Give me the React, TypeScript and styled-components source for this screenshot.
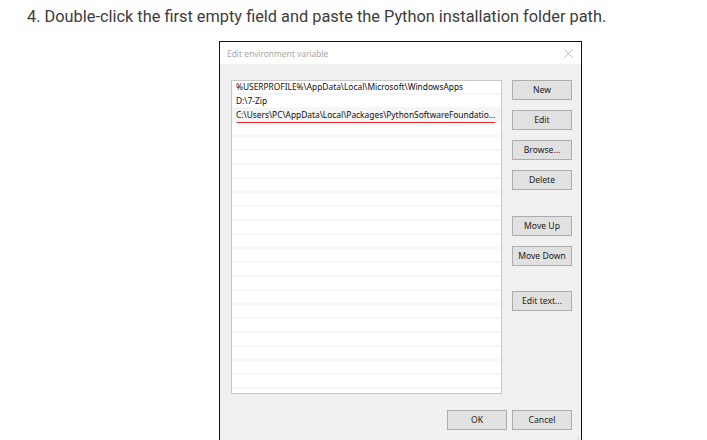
import styled, { createGlobalStyle } from "styled-components";

const GlobalStyle = createGlobalStyle`
  html, body {
    margin: 0;
    padding: 0;
    background: #fff;
    overflow: hidden;
  }
`;

const Page = styled.div`
  width: 707px;
  height: 440px;
  overflow: hidden;
`;

const Step = styled.p`
  margin: 0;
  padding: 5px 0 0 27px;
  font-family: Roboto, "Liberation Sans", sans-serif;
  font-size: 16.35px;
  line-height: 24px;
  color: #3c3c3c;
`;

const Dialog = styled.div`
  position: relative;
  margin: 12px 0 0 219px;
  width: 361px;
  height: 420px;
  border: 1px solid #111;
  border-bottom: none;
  background: #f0f0f0;
  font-family: "Noto Sans", "Open Sans", sans-serif;
  font-size: 8.4px;
`;

const TitleBar = styled.div`
  height: 22px;
  background: #fff;
  display: flex;
  align-items: center;
  justify-content: space-between;
  padding: 0 8px 0 7px;
  color: #a8a8a8;
`;

const Body = styled.div`
  display: flex;
  gap: 10px;
  padding: 16px 9px 0 11px;
`;

const List = styled.div`
  width: 269px;
  height: 312px;
  border: 1px solid #c9c9c9;
  background: #fff;
  overflow: hidden;
`;

const Row = styled.div<{ $selected?: boolean }>`
  position: relative;
  height: 12px;
  line-height: 12px;
  padding: 0 4px;
  border-bottom: 2px solid #f6f6f6;
  background: ${(p) => (p.$selected ? "#f5f5f5" : "#fff")};
  color: #111;
`;

const RowText = styled.span`
  display: block;
  white-space: nowrap;
  overflow: hidden;
  text-overflow: ellipsis;
`;

const Underline = styled.div`
  position: absolute;
  left: 4px;
  right: 5px;
  bottom: -4px;
  height: 3px;
  border-radius: 2px;
  background: #e8232b;
`;

const Side = styled.div`
  display: flex;
  flex-direction: column;
`;

const Button = styled.button<{ $gap?: number }>`
  width: 60px;
  height: 20px;
  margin-top: ${(p) => p.$gap ?? 0}px;
  padding: 0;
  border: 1px solid #adadad;
  background: #e1e1e1;
  color: #222;
  font-family: inherit;
  font-size: 8.6px;
`;

const Footer = styled.div`
  display: flex;
  justify-content: flex-end;
  gap: 5px;
  padding: 16px 9px 0 0;
`;

const Grip = styled.svg`
  position: absolute;
  right: 1px;
  bottom: 18px;
`;

const paths = [
  "%USERPROFILE%\\AppData\\Local\\Microsoft\\WindowsApps",
  "D:\\7-Zip",
  "C:\\Users\\PC\\AppData\\Local\\Packages\\PythonSoftwareFoundation.Python.3.11_qbz5n2kfra8p0\\LocalCache",
];

const rows = Array.from({ length: 23 }, (_, i) => paths[i] ?? "");

const App = () => {
  return (
    <Page>
      <GlobalStyle />
      <Step>
        4. Double-click the first empty field and paste the Python installation
        folder path.
      </Step>
      <Dialog>
        <TitleBar>
          <span>Edit environment variable</span>
          <svg width="9" height="9" viewBox="0 0 9 9">
            <path d="M0.5 0.5 L8.5 8.5 M8.5 0.5 L0.5 8.5" stroke="#b5b5b5" strokeWidth="0.9" />
          </svg>
        </TitleBar>
        <Body>
          <List>
            {rows.map((r, i) => (
              <Row key={i} $selected={i === 2}>
                <RowText>{r || "\u00a0"}</RowText>
                {i === 2 && <Underline />}
              </Row>
            ))}
          </List>
          <Side>
            <Button>New</Button>
            <Button $gap={10}>Edit</Button>
            <Button $gap={10}>Browse...</Button>
            <Button $gap={10}>Delete</Button>
            <Button $gap={26}>Move Up</Button>
            <Button $gap={10}>Move Down</Button>
            <Button $gap={25}>Edit text...</Button>
          </Side>
        </Body>
        <Footer>
          <Button>OK</Button>
          <Button>Cancel</Button>
        </Footer>
        <Grip width="6" height="6" viewBox="0 0 6 6">
          <rect x="4" y="0" width="1" height="1" fill="#bbb" />
          <rect x="2" y="2" width="1" height="1" fill="#bbb" />
          <rect x="4" y="2" width="1" height="1" fill="#bbb" />
          <rect x="0" y="4" width="1" height="1" fill="#bbb" />
          <rect x="2" y="4" width="1" height="1" fill="#bbb" />
          <rect x="4" y="4" width="1" height="1" fill="#bbb" />
        </Grip>
      </Dialog>
    </Page>
  );
};

export default App;
